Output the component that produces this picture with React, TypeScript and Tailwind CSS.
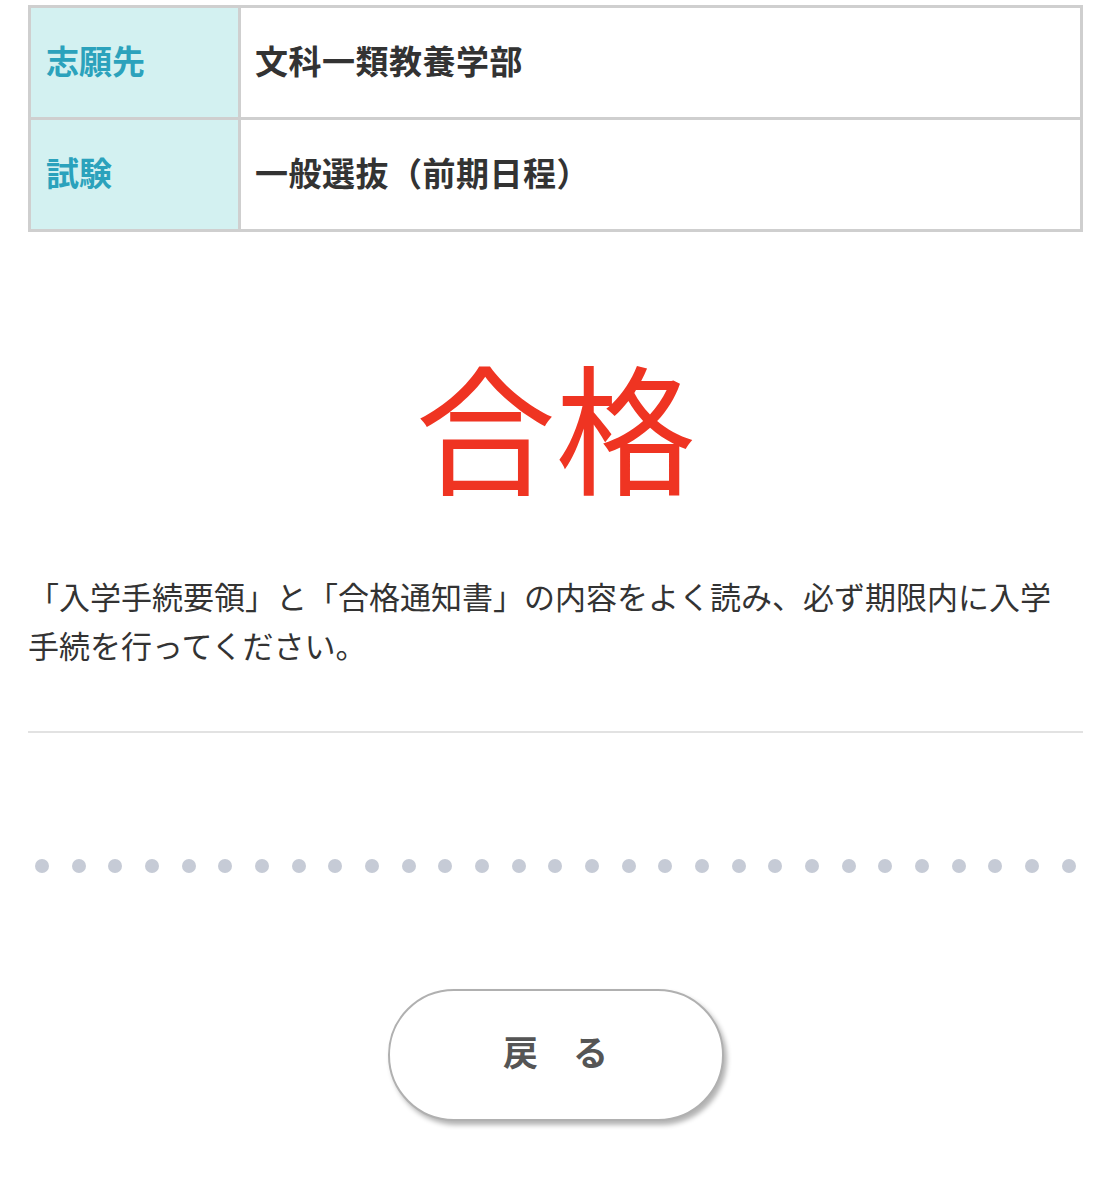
const rows = [
  { label: '志願先', value: '文科一類教養学部' },
  { label: '試験', value: '一般選抜（前期日程）' },
]

export default function App() {
  const dots = Array.from({ length: 29 }, (_, i) => i)

  return (
    <div className="min-h-[1200px] bg-white pl-[28px] pr-[29px] pt-[5px] text-[#333]"
      style={{ fontFamily: '"Noto Sans CJK JP", "Noto Sans", sans-serif' }}>
      <table className="w-full border-collapse border-[3px] border-[#cfcfcf]">
        <tbody>
          {rows.map(r => (
            <tr key={r.label} className="h-[112px]">
              <td className="w-[210px] border-[3px] border-[#cfcfcf] bg-[#d3f1f1] pl-[15px] pb-[4px] text-[33px] font-bold text-[#2ba2bc]">
                {r.label}
              </td>
              <td className="border-[3px] border-[#cfcfcf] pl-[14px] pb-[4px] text-[33px] font-bold tracking-[0.5px] text-[#333]">
                {r.value}
              </td>
            </tr>
          ))}
        </tbody>
      </table>

      <div className="mt-[121px] text-center text-[140px] leading-none text-[#ef3422]">合格</div>

      <p className="mt-[78px] pr-[4px] text-[31px] leading-[49px] text-[#333]">
        「入学手続要領」と「合格通知書」の内容をよく読み、必ず期限内に入学手続を行ってください。
      </p>

      <div className="mt-[62px] h-[2px] bg-[#e2e2e2]" />

      <div className="mt-[126px] flex justify-between px-[7px]">
        {dots.map(i => (
          <span key={i} className="block h-[14px] w-[14px] rounded-full bg-[#c6cbd6]" />
        ))}
      </div>

      <div className="mt-[116px] flex justify-center">
        <button className="flex h-[132px] w-[336px] items-center justify-center rounded-full border-2 border-[#b0b0b0] bg-white pb-[8px] text-[35px] font-bold text-[#555] shadow-[3px_4px_5px_rgba(0,0,0,0.3)]">
          戻　る
        </button>
      </div>
    </div>
  )
}
